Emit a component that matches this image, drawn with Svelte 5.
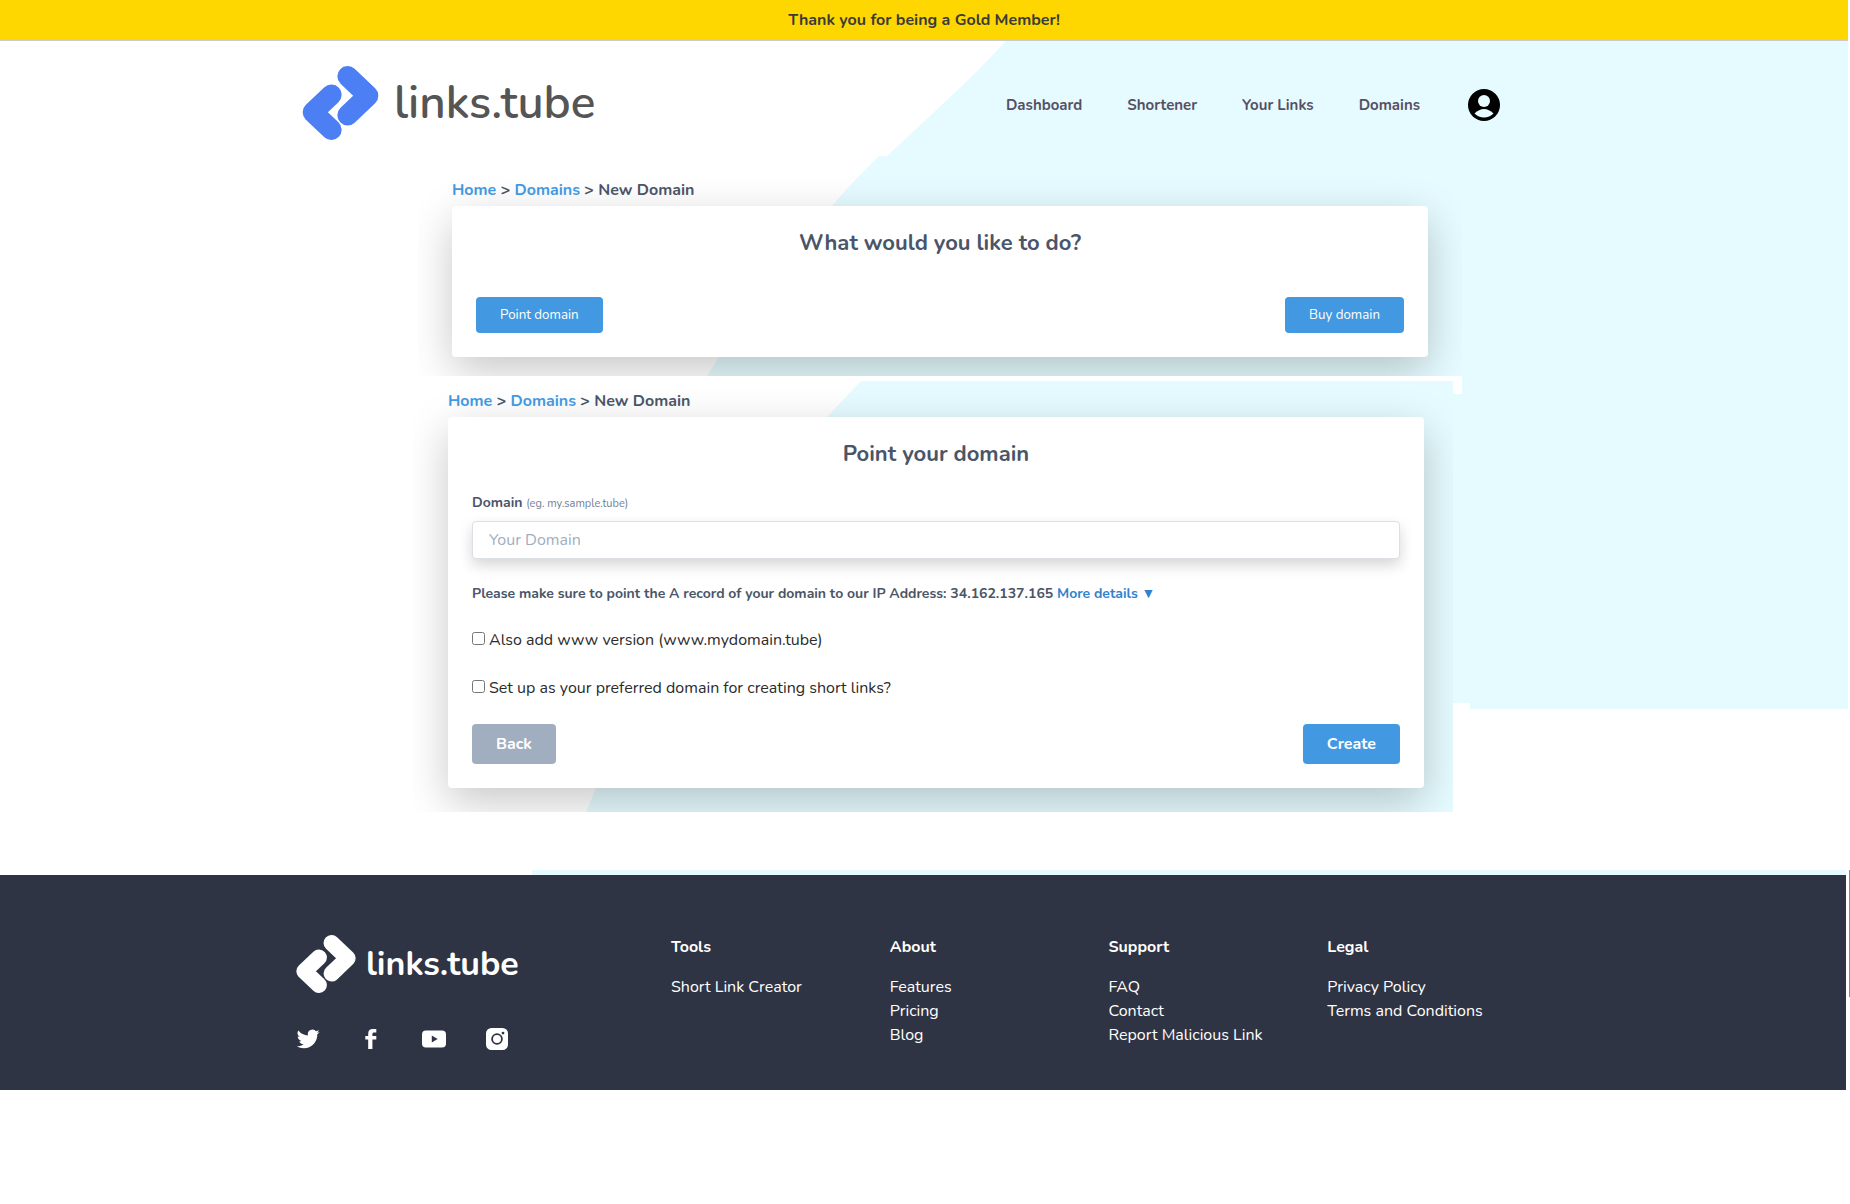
<script>
	const navLinks = ['Dashboard', 'Shortener', 'Your Links', 'Domains'];

	const footerColumns = [
		{ title: 'Tools', links: ['Short Link Creator'] },
		{ title: 'About', links: ['Features', 'Pricing', 'Blog'] },
		{ title: 'Support', links: ['FAQ', 'Contact', 'Report Malicious Link'] },
		{ title: 'Legal', links: ['Privacy Policy', 'Terms and Conditions'] }
	];

	const socials = [
		{
			name: 'Twitter',
			path: 'M23.6 4.9a9 9 0 0 1-2.6.7 4.6 4.6 0 0 0 2-2.5 9 9 0 0 1-2.9 1.1A4.7 4.7 0 0 0 12 8.5 13.3 13.3 0 0 1 2.300 3.600a4.700 4.700 0 0 0 1.500 6.300 4.600 4.600 0 0 1-2.100-.6c0 2.300 1.600 4.200 3.700 4.700a4.700 4.700 0 0 1-2.100.1 4.700 4.700 0 0 0 4.400 3.200A9.400 9.400 0 0 1 .7 19.200 13.200 13.200 0 0 0 7.900 21.300c8.700 0 13.700-7.400 13.400-14a9.600 9.600 0 0 0 2.300-2.400z'
		},
		{
			name: 'Facebook',
			path: 'M9.200 22v-9.400H6.300V9h2.900V6.400C9.200 3.500 11 2 13.700 2h3.600v3.500h-2.100c-1.400 0-1.800.7-1.800 1.700V9h3.900v3.600h-3.900V22z'
		},
		{
			name: 'YouTube',
			path: 'M4 3.500h16a4 4 0 0 1 4 4v9a4 4 0 0 1-4 4H4a4 4 0 0 1-4-4v-9a4 4 0 0 1 4-4zM9.800 8.600v6.800l5.800-3.400z'
		},
		{
			name: 'Instagram',
			path: 'M6.500 1h11A5.500 5.500 0 0 1 23 6.500v11a5.500 5.500 0 0 1-5.500 5.500h-11A5.500 5.500 0 0 1 1 17.500v-11A5.500 5.500 0 0 1 6.500 1zM12 6.200a5.800 5.800 0 1 0 0 11.600 5.800 5.800 0 0 0 0-11.600zM12 8a4 4 0 1 1 0 8 4 4 0 0 1 0-8zM18 4.700a1.400 1.400 0 1 0 0 2.800 1.400 1.400 0 0 0 0-2.800z'
		}
	];

	let domain = $state('');
	let addWww = $state(false);
	let preferred = $state(false);
</script>

{#snippet logoMark()}
	<svg class="mark" viewBox="0 0 231 224" aria-hidden="true">
		<g fill="none" stroke="currentColor" stroke-width="62" stroke-linecap="round" stroke-linejoin="round">
			<path d="M137 31 L199 90 L137 149" />
			<path d="M88 87 L32 140 L88 193" />
		</g>
	</svg>
{/snippet}

{#snippet breadcrumb()}
	<nav class="breadcrumb" aria-label="Breadcrumb">
		<a href="#home">Home</a> &gt; <a href="#domains">Domains</a> &gt; <span>New Domain</span>
	</nav>
{/snippet}

<div class="banner">Thank you for being a Gold Member!</div>

<div class="page">
	<svg class="backdrop" viewBox="0 0 1850 668" preserveAspectRatio="none" aria-hidden="true">
		<path
			fill="#e5fbff"
			d="M1006 0 Q976 32 947 59 L887 115 H879 Q854 139 832 165 Q764 242 719 316 L707 335 H1462 V353 H1453 V662 H1470 V668 H1848 V0 Z"
		/>
	</svg>

	<header class="header">
		<a class="logo" href="#home">
			{@render logoMark()}
			<span>links.tube</span>
		</a>
		<nav class="nav" aria-label="Main">
			{#each navLinks as link}
				<a href="#{link}">{link}</a>
			{/each}
			<button class="avatar" aria-label="Account">
				<svg viewBox="0 0 32 32" aria-hidden="true">
					<circle cx="16" cy="16" r="16" />
					<circle cx="16" cy="12" r="6" fill="#e5fbff" />
					<path d="M6.500 24.500Q11 20 16 20T25.500 24.500Q21.500 28.500 16 28.500T6.500 24.500z" fill="#e5fbff" />
				</svg>
			</button>
		</nav>
	</header>

	<main class="content">
		<section class="panel choose">
			{@render breadcrumb()}
			<div class="card">
				<h2>What would you like to do?</h2>
				<div class="actions">
					<button class="btn">Point domain</button>
					<button class="btn">Buy domain</button>
				</div>
			</div>
		</section>

		<section class="panel point">
			<svg class="panel-shape" viewBox="0 0 1040 431" preserveAspectRatio="none" aria-hidden="true">
				<path fill="#e5fbff" d="M448 0 L414 36 Q250 225 183 407 L173 431 H1040 V0 Z" />
			</svg>
			{@render breadcrumb()}
			<form class="card" onsubmit={(e) => e.preventDefault()}>
				<h2>Point your domain</h2>
				<label class="field-label" for="domain">Domain <small>(eg. my.sample.tube)</small></label>
				<input id="domain" class="field" type="text" placeholder="Your Domain" bind:value={domain} />
				<p class="note">
					Please make sure to point the A record of your domain to our IP Address: 34.162.137.165
					<a href="#details">More details ▼</a>
				</p>
				<label class="check">
					<input type="checkbox" bind:checked={addWww} />Also add www version (www.mydomain.tube)
				</label>
				<label class="check">
					<input type="checkbox" bind:checked={preferred} />Set up as your preferred domain for creating short links?
				</label>
				<div class="actions">
					<button type="button" class="btn large back">Back</button>
					<button type="submit" class="btn large">Create</button>
				</div>
			</form>
		</section>
	</main>
</div>

<div class="footer-wrap">
	<div class="footer-line"></div>
	<footer class="footer">
		<div class="footer-inner">
			<div>
				<a class="logo light" href="#home">
					{@render logoMark()}
					<span>links.tube</span>
				</a>
				<div class="socials">
					{#each socials as social}
						<a href="#{social.name}" aria-label={social.name}>
							<svg viewBox="0 0 24 24" aria-hidden="true">
								<path fill="currentColor" fill-rule="evenodd" d={social.path} />
							</svg>
						</a>
					{/each}
				</div>
			</div>
			{#each footerColumns as column}
				<div class="column">
					<h3>{column.title}</h3>
					<ul>
						{#each column.links as link}
							<li><a href="#{link}">{link}</a></li>
						{/each}
					</ul>
				</div>
			{/each}
		</div>
	</footer>
</div>

<style>
	:global(body) {
		background: #fff;
		color: #4a5568;
		font-family: Nunito, 'Open Sans', sans-serif;
		font-size: 16px;
		line-height: 24px;
	}

	a {
		color: inherit;
		text-decoration: none;
	}

	button,
	input {
		font-family: inherit;
	}

	h2,
	h3,
	p,
	ul {
		margin: 0;
		padding: 0;
	}

	.banner {
		margin-right: 2px;
		padding: 8px 0;
		background: #ffd700;
		border-bottom: 1px solid #cbcbcb;
		color: #3b3b3b;
		font-weight: 700;
		text-align: center;
	}

	.page {
		position: relative;
	}

	.backdrop {
		position: absolute;
		top: 0;
		left: 0;
		width: 100%;
		height: 668px;
		z-index: -1;
	}

	.header,
	.content {
		box-sizing: border-box;
		max-width: 1280px;
		margin: 0 auto;
	}

	.header {
		display: flex;
		align-items: center;
		justify-content: space-between;
		padding: 25px 65px 16px 17px;
	}

	.logo {
		display: flex;
		align-items: center;
		gap: 15px;
		color: #555;
		font-size: 46px;
		font-weight: 600;
		line-height: 74px;
	}
	.logo .mark {
		width: 77px;
		height: 74px;
		color: #4c7ff3;
	}
	.logo.light {
		gap: 10px;
		color: #fff;
		font-size: 34px;
		font-weight: 700;
		line-height: 58px;
	}
	.logo.light .mark {
		width: 60px;
		height: 58px;
		color: #fff;
	}

	.nav {
		display: flex;
		align-items: center;
		gap: 45px;
		margin-top: 4px;
		color: #555064;
		font-size: 15px;
		font-weight: 700;
	}

	.avatar {
		margin: 0 0 0 3px;
		padding: 0;
		border: 0;
		background: none;
		cursor: pointer;
	}
	.avatar svg {
		display: block;
		width: 32px;
		height: 32px;
	}

	.panel {
		box-sizing: border-box;
		overflow: hidden;
	}
	.choose {
		max-width: 1044px;
		margin-left: 133px;
		padding: 22px 34px 19px;
	}
	.point {
		position: relative;
		z-index: 0;
		max-width: 1040px;
		margin-top: 5px;
		margin-left: 128px;
		padding: 8px 29px 24px 35px;
		background: #fff;
	}
	.panel-shape {
		position: absolute;
		inset: 0;
		width: 100%;
		height: 100%;
		z-index: -1;
	}

	.breadcrumb {
		margin-bottom: 4px;
		font-weight: 700;
	}
	.breadcrumb a {
		color: #4299e1;
	}

	.card {
		padding: 24px;
		background: #fff;
		border-radius: 4px;
		box-shadow: 0 14px 44px rgba(0, 0, 0, 0.22);
	}
	.card h2 {
		margin-bottom: 26px;
		font-size: 22px;
		font-weight: 700;
		line-height: 26px;
		text-align: center;
	}
	.choose h2 {
		margin-bottom: 41px;
	}

	.actions {
		display: flex;
		justify-content: space-between;
	}

	.btn {
		padding: 8px 24px;
		border: 0;
		border-radius: 4px;
		background: #4299e1;
		color: #fff;
		line-height: 20px;
		cursor: pointer;
	}
	.btn.large {
		font-size: 16px;
		font-weight: 700;
		line-height: 24px;
	}
	.btn.back {
		background: #a0aec0;
	}

	.field-label {
		display: block;
		margin-bottom: 7px;
		font-size: 14px;
		font-weight: 700;
		line-height: 20px;
	}
	.field-label small {
		color: #718096;
		font-size: 11px;
		font-weight: 400;
	}

	.field {
		display: block;
		box-sizing: border-box;
		width: 100%;
		height: 38px;
		padding: 0 16px;
		border: 1px solid #dcdfe3;
		border-radius: 4px;
		background: #fff;
		box-shadow: 0 6px 14px rgba(0, 0, 0, 0.17);
		color: #4a5568;
		font-size: 16px;
	}
	.field::placeholder {
		color: #a0aec0;
	}

	.note {
		margin: 25px 0 24px;
		font-size: 14px;
		font-weight: 700;
		line-height: 20px;
	}
	.note a {
		color: #3182ce;
	}

	.check {
		display: block;
		margin-bottom: 24px;
		color: #2b2b2b;
	}
	.check input {
		width: 13px;
		height: 13px;
		margin: 0 4px 0 0;
		vertical-align: baseline;
	}

	.footer-wrap {
		margin-top: 58px;
		padding-right: 4px;
		background: linear-gradient(#8a8a8a, #8a8a8a) right top / 1px 127px no-repeat;
	}
	.footer-line {
		height: 5px;
		margin-left: 532px;
		background: #e5fbff;
	}
	.footer {
		padding: 60px 0 39px;
		background: #2f3444;
		color: #fff;
	}
	.footer-inner {
		display: grid;
		box-sizing: border-box;
		grid-template-columns: 375px repeat(4, 1fr);
		max-width: 1280px;
		margin: 0 auto;
		padding: 0 17px 0 13px;
	}

	.socials {
		display: flex;
		gap: 39px;
		margin-top: 34px;
	}
	.socials svg {
		display: block;
		width: 24px;
		height: 24px;
	}

	.column h3 {
		margin-bottom: 16px;
		font-size: 16px;
		font-weight: 700;
		line-height: 24px;
	}
	.column ul {
		list-style: none;
	}

	@media (max-width: 1200px) {
		.choose,
		.point {
			margin-left: auto;
			margin-right: auto;
		}
		.footer-inner {
			grid-template-columns: repeat(2, 1fr);
			gap: 32px;
		}
	}
</style>
